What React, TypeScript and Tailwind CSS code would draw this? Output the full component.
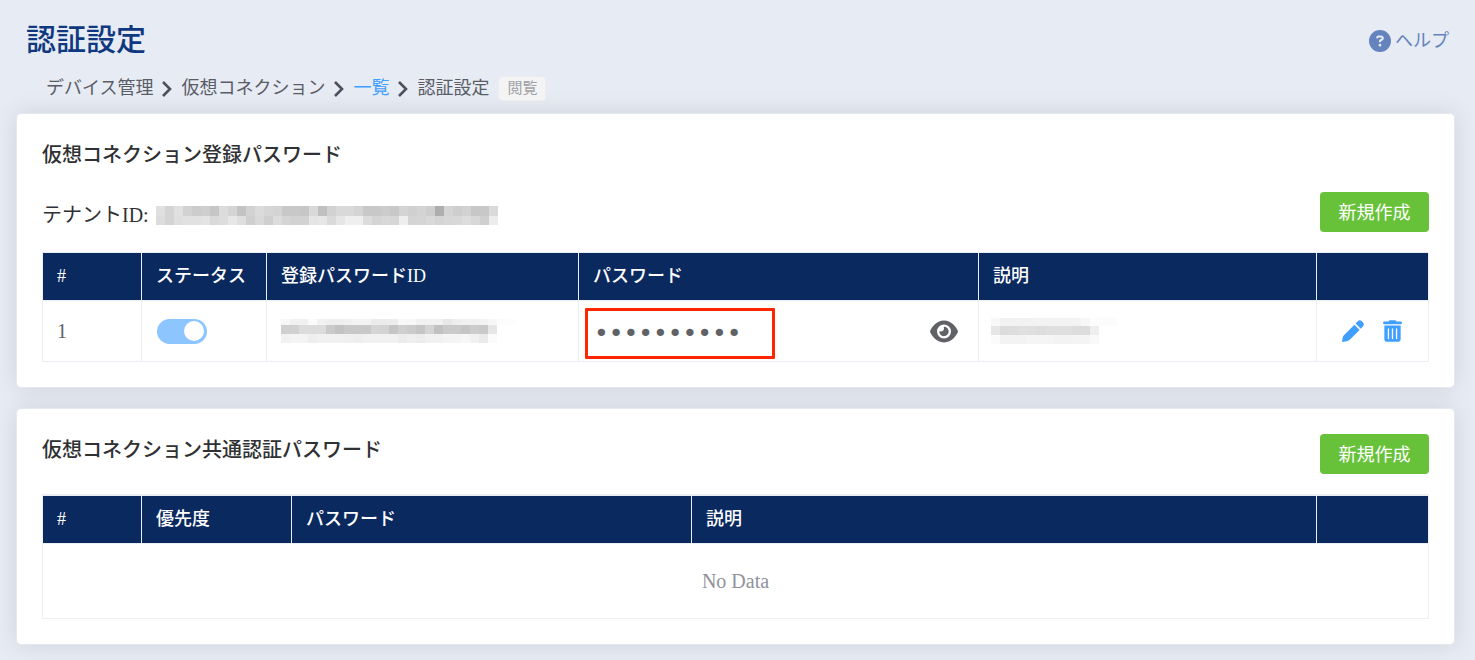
import { useState, type ReactNode } from "react";
import { FaCircleQuestion, FaEye, FaTrashCan } from "react-icons/fa6";

const tenantTop =
    "e0 d4 e0 d2 cc ce c6 dc d4 c3 d2 db d6 d4 c8 c8 c6 d9 c0 d2 d9 d9 d4 c8 c8 cc c8 d4 d0 d4 ce ae d4 ce d2 c7 c8 da".split(" ");
const tenantBottom =
    "dc d4 df e1 e1 e3 d9 dd e7 df cf d9 cf dc d4 d2 d2 e5 e7 da e6 ef ef dc d4 d8 d6 ee d4 d5 d9 d4 d7 d8 dd d8 cf ec".split(" ");

const idTop = "f7 f1 f1 fb f2 ee ee f1 f3 f3 ec ec ec f8 f7 f1 f1 f1 e8 ee f1 f1 f3 f7 fc fd".split(" ");
const idMiddle = "d0 d1 dc dc dc ca c2 c8 c8 c8 d5 d3 c5 cf cb c5 d4 c1 ca ca c5 cc c9 e6".split(" ");
const idBottom = "f1 f4 f4 ee f1 f1 f1 f0 ee f1 f1 f1 f1 ec ef ec f1 f1 f4 f4 f7 f1 ea fb".split(" ");

const noteTop = "f8 f2 f2 f2 f2 f3 f3 f3 f3 f3 f7 fc fc fc".split(" ");
const noteMiddle = "e6 dc dd e0 df dd df df df dc dc ee".split(" ");
const noteBottom = "fb f3 f3 f3 f5 f5 f5 f3 f3 f4 f4 f9".split(" ");

function Mosaic({ rows, heights }: { rows: string[][]; heights: number[] }) {
    const width = Math.max(...rows.map((row) => row.length)) * 9;
    const height = heights.reduce((a, b) => a + b, 0);

    return (
        <svg
            width={width}
            height={height}
            shapeRendering="crispEdges"
            className="block shrink-0"
            aria-hidden="true"
        >
            {rows.map((row, r) =>
                row.map((tone, i) => (
                    <rect
                        key={`${r}-${i}`}
                        x={i * 9}
                        y={heights.slice(0, r).reduce((a, b) => a + b, 0)}
                        width={9}
                        height={heights[r]}
                        fill={`#${tone}${tone}${tone}`}
                    />
                )),
            )}
        </svg>
    );
}

function Chevron() {
    return (
        <svg
            viewBox="0 0 10 16"
            className="h-4 w-[10px] shrink-0"
            fill="none"
            stroke="#4e4f5c"
            strokeWidth="2.6"
            aria-hidden="true"
        >
            <path d="M1 1 8 8 1 15" />
        </svg>
    );
}

function Pencil() {
    return (
        <svg
            viewBox="0 0 22 22"
            className="size-[22px]"
            fill="currentColor"
            aria-hidden="true"
        >
            <path d="M0 22 .7 17.4Q1 16.2 1.9 15.3L12.4 4.7 17.6 9.9 8 19.4Q6.6 20.7 4.8 21.2Z" />
            <path d="M13.6 3.5 15.6 1.4Q17.4-.5 19.6 1L21 2.4Q22.7 4.4 20.9 6.4L18.8 8.7Z" />
        </svg>
    );
}

function Card({ children }: { children: ReactNode }) {
    return (
        <section className="rounded-[5px] border border-[#e4e8f0] bg-white p-[25px] shadow-[0_0_25px_rgba(0,0,0,0.1)]">
            {children}
        </section>
    );
}

function CreateButton() {
    return (
        <button
            type="button"
            className="h-10 min-w-[109px] shrink-0 rounded-[4px] bg-[#67c23a] px-[18px] pt-px text-[18px] leading-[20px] text-white"
        >
            新規作成
        </button>
    );
}

function Th({ children }: { children?: ReactNode }) {
    return (
        <th className="h-12 border-r border-b border-[#ebeef5] bg-[#0a295f] px-[14px] pb-[2px] text-left text-[18px] leading-[28px] font-medium text-white">
            {children}
        </th>
    );
}

const cell = "h-[61px] border-r border-b border-[#ebeef5] text-[#606266]";
const table =
    "w-full table-fixed border-separate border-spacing-0 border-l border-t border-[#ebeef5]";

export default function App() {
    const [enabled, setEnabled] = useState(true);

    return (
        <main className="min-h-screen bg-[#e6ebf4] pt-5 pr-5 pb-[15px] pl-4 font-['Liberation_Serif','Noto_Sans_CJK_JP',serif]">
            <header className="flex h-10 items-center justify-between pr-[6px] pl-[10px]">
                <h1 className="text-[30px] leading-[40px] font-medium text-[#0f3880]">
                    認証設定
                </h1>
                <a
                    href="#help"
                    className="flex items-center gap-1 pt-[2px] text-[18px] leading-[28px] text-[#6584bd]"
                >
                    <FaCircleQuestion className="size-[22px]" />
                    ヘルプ
                </a>
            </header>

            <nav
                aria-label="breadcrumb"
                className="mt-4 mb-3 flex h-[25px] items-center gap-[9px] pl-[30px] text-[18px] leading-[25px] text-[#5a5c66]"
            >
                <span>デバイス管理</span>
                <Chevron />
                <span>仮想コネクション</span>
                <Chevron />
                <a href="#list" className="text-[#409eff]">
                    一覧
                </a>
                <Chevron />
                <span>認証設定</span>
                <span className="rounded-[4px] border border-[#ededf0] bg-[#f4f4f5] px-2 text-[15px] leading-[23px] text-[#a0a2a6]">
                    閲覧
                </span>
            </nav>

            <div className="space-y-5">
                <Card>
                    <h2 className="text-[20px] leading-[32px] font-medium text-[#303133]">
                        仮想コネクション登録パスワード
                    </h2>

                    <div className="mt-[21px] mb-5 flex items-center justify-between">
                        <p className="flex items-center gap-[7px] pt-[6px] text-[20px] leading-[30px] text-[#303133]">
                            テナントID:
                            <Mosaic
                                rows={[tenantTop, tenantBottom]}
                                heights={[10, 9]}
                            />
                        </p>
                        <CreateButton />
                    </div>

                    <table className={table}>
                        <colgroup>
                            <col className="w-[99px]" />
                            <col className="w-[125px]" />
                            <col className="w-[312px]" />
                            <col className="w-[400px]" />
                            <col />
                            <col className="w-[112px]" />
                        </colgroup>
                        <thead>
                            <tr>
                                <Th>#</Th>
                                <Th>ステータス</Th>
                                <Th>登録パスワードID</Th>
                                <Th>パスワード</Th>
                                <Th>説明</Th>
                                <Th />
                            </tr>
                        </thead>
                        <tbody>
                            <tr>
                                <td className={`${cell} px-[14px] text-[20px]`}>
                                    1
                                </td>
                                <td className={`${cell} px-[15px]`}>
                                    <label className="flex h-[25px] w-[50px] items-center rounded-full bg-[#8cc5ff] p-[3px]">
                                        <input
                                            type="checkbox"
                                            role="switch"
                                            aria-label="ステータス"
                                            checked={enabled}
                                            onChange={() => setEnabled(!enabled)}
                                            className="peer sr-only"
                                        />
                                        <span className="size-5 rounded-full bg-white peer-checked:ml-6" />
                                    </label>
                                </td>
                                <td className={`${cell} px-[14px]`}>
                                    <Mosaic
                                        rows={[idTop, idMiddle, idBottom]}
                                        heights={[6, 9, 9]}
                                    />
                                </td>
                                <td className={`${cell} relative pr-5 pl-[15px]`}>
                                    <div className="flex items-center justify-between">
                                        <input
                                            type="password"
                                            aria-label="パスワード"
                                            readOnly
                                            value="0000000000"
                                            className="h-[34px] w-[170px] bg-transparent pt-1 font-['DejaVu_Sans',sans-serif] text-[25px] leading-[30px] text-[#606266] outline-none"
                                        />
                                        <button
                                            type="button"
                                            aria-label="パスワードを表示"
                                        >
                                            <FaEye className="h-[25px] w-7" />
                                        </button>
                                    </div>
                                    <span className="pointer-events-none absolute top-[7px] left-[6px] h-[51px] w-[190px] rounded-[1px] border-3 border-[#ff2600]" />
                                </td>
                                <td className={`${cell} px-3`}>
                                    <Mosaic
                                        rows={[noteTop, noteMiddle, noteBottom]}
                                        heights={[8, 9, 9]}
                                    />
                                </td>
                                <td className={cell}>
                                    <div className="flex items-center justify-center gap-[19px] pr-[2px] text-[#409eff]">
                                        <button type="button" aria-label="編集">
                                            <Pencil />
                                        </button>
                                        <button type="button" aria-label="削除">
                                            <FaTrashCan className="h-[22px] w-[19px]" />
                                        </button>
                                    </div>
                                </td>
                            </tr>
                        </tbody>
                    </table>
                </Card>

                <Card>
                    <div className="mb-5 flex items-start justify-between">
                        <h2 className="text-[20px] leading-[32px] font-medium text-[#303133]">
                            仮想コネクション共通認証パスワード
                        </h2>
                        <CreateButton />
                    </div>

                    <table className={`${table} border-t-2`}>
                        <colgroup>
                            <col className="w-[99px]" />
                            <col className="w-[150px]" />
                            <col className="w-[400px]" />
                            <col />
                            <col className="w-[112px]" />
                        </colgroup>
                        <thead>
                            <tr>
                                <Th>#</Th>
                                <Th>優先度</Th>
                                <Th>パスワード</Th>
                                <Th>説明</Th>
                                <Th />
                            </tr>
                        </thead>
                        <tbody>
                            <tr>
                                <td
                                    colSpan={5}
                                    className="h-[75px] border-r border-b border-[#ebeef5] text-center text-[20px] text-[#909399]"
                                >
                                    No Data
                                </td>
                            </tr>
                        </tbody>
                    </table>
                </Card>
            </div>
        </main>
    );
}
